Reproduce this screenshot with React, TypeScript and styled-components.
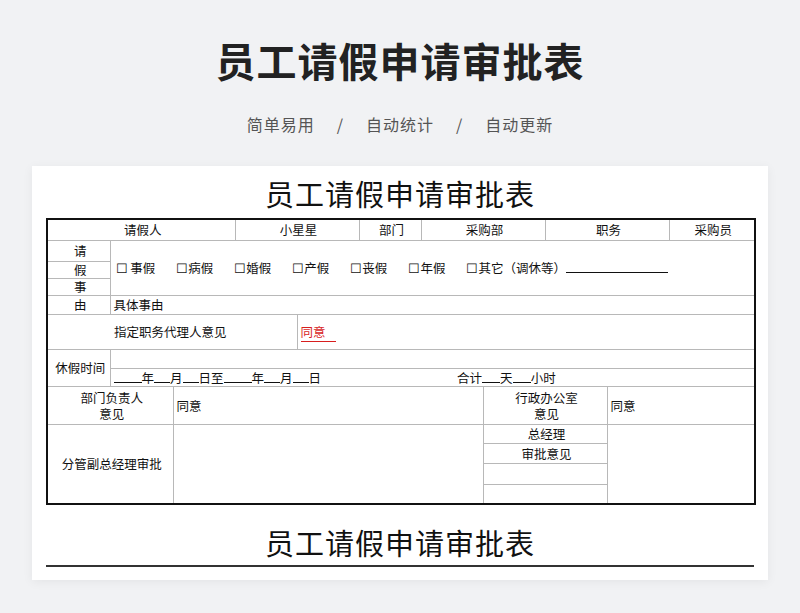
import styled, { createGlobalStyle } from "styled-components";

const Global = createGlobalStyle`
  body {
    margin: 0;
    background: #f1f2f4;
    font-family: "Noto Sans CJK SC", "Noto Sans", sans-serif;
  }
`;

const Page = styled.div`
  width: 800px;
  height: 613px;
  overflow: hidden;
  display: flex;
  flex-direction: column;
  align-items: center;
`;

const Heading = styled.h1`
  margin: 32px 0 0;
  font-size: 40px;
  line-height: 56px;
  font-weight: 700;
  color: #222;
  letter-spacing: 1px;
`;

const Sub = styled.div`
  margin-top: 24px;
  font-size: 16px;
  color: #555;
  display: flex;
  gap: 22px;
  letter-spacing: 1px;
`;

const Card = styled.div`
  margin-top: 30px;
  width: 736px;
  height: 414px;
  background: #fff;
  box-shadow: 0 2px 10px rgba(0, 0, 0, 0.06);
  padding: 0 14px;
  box-sizing: border-box;
  color: #111;
`;

const SheetTitle = styled.div`
  text-align: center;
  font-size: 29px;
  line-height: 30px;
  padding-top: 12px;
  height: 52px;
  box-sizing: border-box;
  letter-spacing: 1px;
`;

const Table = styled.table`
  width: 708px;
  border-collapse: collapse;
  table-layout: fixed;
  border: 2px solid #111;
  font-size: 12.5px;
`;

const Td = styled.td<{ $align?: string; $h?: number; $pl?: number }>`
  border: 1px solid #b8b8b8;
  padding: 0 0 0 ${(p) => p.$pl ?? 3}px;
  height: ${(p) => p.$h ?? 18}px;
  text-align: ${(p) => p.$align ?? "center"};
  line-height: 16px;
  white-space: nowrap;
  overflow: hidden;
`;

const Checks = styled.div`
  display: flex;
  gap: 21px;
  align-items: center;
`;

const Blank = styled.span<{ $w: number }>`
  display: inline-block;
  width: ${(p) => p.$w}px;
  border-bottom: 1px solid #111;
  height: 12px;
`;

const Red = styled.span`
  color: #d81e1e;
  padding-right: 10px;
  border-bottom: 1px solid #d81e1e;
`;

const Gap = styled.span<{ $w: number }>`
  display: inline-block;
  width: ${(p) => p.$w}px;
`;

const Bottom = styled.div`
  margin-top: 20px;
  text-align: center;
  font-size: 29px;
  line-height: 34px;
  padding-bottom: 6px;
  border-bottom: 2px solid #333;
  letter-spacing: 1px;
`;

const widths = [63, 63, 62, 62, 62, 62, 62, 62, 62, 62, 86];

export default function App() {
  return (
    <Page>
      <Global />
      <Heading>员工请假申请审批表</Heading>
      <Sub>
        <span>简单易用</span>
        <span>/</span>
        <span>自动统计</span>
        <span>/</span>
        <span>自动更新</span>
      </Sub>
      <Card>
        <SheetTitle>员工请假申请审批表</SheetTitle>
        <Table>
          <colgroup>
            {widths.map((w, i) => (
              <col key={i} style={{ width: w }} />
            ))}
          </colgroup>
          <tbody>
            <tr>
              <Td colSpan={3} $h={20}>请假人</Td>
              <Td colSpan={2}>小星星</Td>
              <Td>部门</Td>
              <Td colSpan={2}>采购部</Td>
              <Td colSpan={2}>职务</Td>
              <Td>采购员</Td>
            </tr>
            <tr>
              <Td $h={20}>请</Td>
              <Td colSpan={10} rowSpan={3} $align="left" $pl={5}>
                <Checks>
                  <span>☐ 事假</span>
                  <span>☐病假</span>
                  <span>☐婚假</span>
                  <span>☐产假</span>
                  <span>☐丧假</span>
                  <span>☐年假</span>
                  <span>
                    ☐其它（调休等）<Blank $w={102} />
                  </span>
                </Checks>
              </Td>
            </tr>
            <tr>
              <Td $h={14}>假</Td>
            </tr>
            <tr>
              <Td $h={14}>事</Td>
            </tr>
            <tr>
              <Td $h={18}>由</Td>
              <Td colSpan={10} $align="left">具体事由</Td>
            </tr>
            <tr>
              <Td colSpan={4} $h={34} $align="left" $pl={66}>指定职务代理人意见</Td>
              <Td colSpan={7} $align="left">
                <Red>同意</Red>
              </Td>
            </tr>
            <tr>
              <Td rowSpan={2} $h={18}>休假时间</Td>
              <Td colSpan={10}></Td>
            </tr>
            <tr>
              <Td colSpan={10} $h={17} $align="left">
                <Blank $w={28} />年<Blank $w={16} />月<Blank $w={16} />日至<Blank $w={28} />年<Blank $w={16} />月<Blank $w={16} />日
                <Gap $w={136} />
                合计<Blank $w={18} />天<Blank $w={18} />小时
              </Td>
            </tr>
            <tr>
              <Td colSpan={2} $h={37}>部门负责人<br />意见</Td>
              <Td colSpan={5} $align="left">同意</Td>
              <Td colSpan={2}>行政办公室<br />意见</Td>
              <Td colSpan={2} $align="left">同意</Td>
            </tr>
            <tr>
              <Td colSpan={2} rowSpan={4}>分管副总经理审批</Td>
              <Td colSpan={5} rowSpan={4}></Td>
              <Td colSpan={2} $h={18}>总经理</Td>
              <Td colSpan={2} rowSpan={4}></Td>
            </tr>
            <tr>
              <Td colSpan={2} $h={19}>审批意见</Td>
            </tr>
            <tr>
              <Td colSpan={2} $h={20}></Td>
            </tr>
            <tr>
              <Td colSpan={2} $h={18}></Td>
            </tr>
          </tbody>
        </Table>
        <Bottom>员工请假申请审批表</Bottom>
      </Card>
    </Page>
  );
}
